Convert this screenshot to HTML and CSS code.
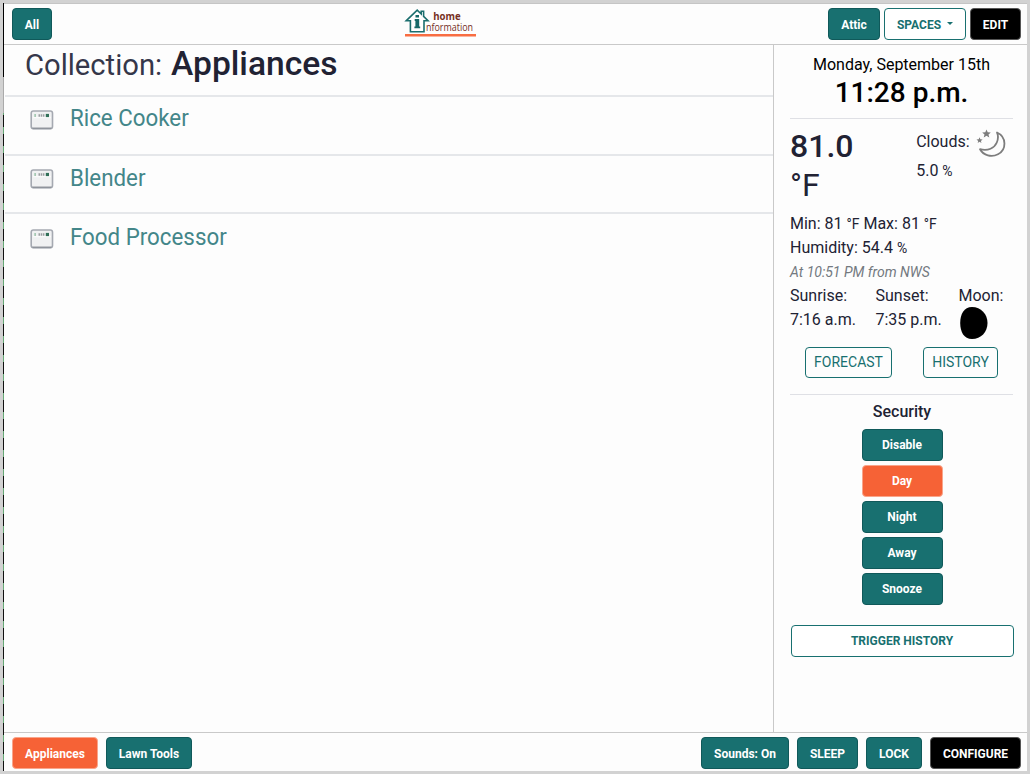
FILE: index.html
```html
<!DOCTYPE html>
<html lang="en">
<head>
<meta charset="utf-8">
<title>Home Information</title>
<link rel="stylesheet" href="styles.css">
</head>
<body>
<svg class="defs" width="0" height="0">
  <symbol id="appliance" viewBox="0 0 24 20">
    <rect x="1.2" y="1" width="21.3" height="17.6" rx="2.2" fill="#f0f1f2" stroke="#a5a9b1" stroke-width="1.6"/>
    <path d="M2.5 18.4h18.8" stroke="#8f949c" stroke-width="1.5"/>
    <path d="M3 7.5h18" stroke="#fafafa" stroke-width="1.5"/>
    <rect x="4.5" y="4" width="1.2" height="3" fill="#85b798"/>
    <path d="M8.500 5.500h6" stroke="#9b9ea1" stroke-width="2.500" stroke-dasharray="1.500 .7"/>
    <rect x="15.8" y="3.900" width="3.200" height="3.200" fill="#327159"/>
  </symbol>
</svg>
<div class="app">
  <div class="edge"></div>
  <div class="screen">
    <header class="bar">
      <a class="btn w40">All</a>
      <div class="logo">
        <svg width="74" height="29" viewBox="0 0 74 29">
          <path d="M2.3 12.7 13.2 2.200l4 3.800V3.300h2.400v5l4.400 4.400h-4V23.800H6.400V12.700Z" fill="#fff" stroke="#1b6e6e" stroke-width="1.600"/>
          <path d="M11.500 7h3.500v2.500h-3.500zM10.700 11.100h4.500v7.500h1v1.700h-5.800v-1.700h1v-5.700h-.7z" fill="#176969"/>
          <text x="29.200" y="11.800" class="logo-home" textLength="27.500" lengthAdjust="spacingAndGlyphs">home</text>
          <text x="22" y="23" class="logo-info" textLength="47" lengthAdjust="spacingAndGlyphs">nformation</text>
          <path d="M1 27.200h71" stroke="#f86d42" stroke-width="2.600"/>
        </svg>
      </div>
      <div class="group tight">
        <a class="btn w52">Attic</a>
        <a class="btn outline w82">SPACES <i class="caret"></i></a>
        <a class="btn black w51">EDIT</a>
      </div>
    </header>
    <div class="content">
      <main class="main">
        <h1 class="title"><span class="label">Collection:</span> <span class="name">Appliances</span></h1>
        <div class="item first"><svg class="icon" width="24" height="20"><use href="#appliance"/></svg><span>Rice Cooker</span></div>
        <div class="item"><svg class="icon" width="24" height="20"><use href="#appliance"/></svg><span>Blender</span></div>
        <div class="item last"><svg class="icon" width="24" height="20"><use href="#appliance"/></svg><span>Food Processor</span></div>
      </main>
      <aside class="side">
        <section class="clock">
          <div class="date">Monday, September 15th</div>
          <div class="time">11:28 p.m.</div>
        </section>
        <section class="weather">
          <div class="now">
            <div class="temp"><b>81.0</b><span>°F</span></div>
            <div class="clouds">
              <div class="cloud-row">Clouds:
                <svg width="30" height="30" viewBox="0 0 30 30" fill="none" stroke="#7d7d7d" stroke-width="1.800" stroke-linejoin="round">
                  <path d="M21 2.500C31 7 30.500 20 22 24.200C15.500 27.600 7.500 25.500 4 19.200C12 21.400 18.500 18 20.800 12.500C22.300 8.800 22.500 5.500 21 2.500Z"/>
                  <path stroke="none" fill="#7d7d7d" d="m10.500-.5 1.200 2.700 3.100.2-2.300 2 .8 3L10.500 5.800 7.700 7.400l.8-3L6.200 2.400l3.100-.2zM3.500 7.300l.9 2 2.200.1-1.700 1.500.6 2.100-2-1.200L1.700 13l.5-2.100L.5 9.400l2.200-.1z"/>
                </svg>
              </div>
              <div class="percent">5.0 <small>%</small></div>
            </div>
          </div>
          <div class="line">Min: 81 <small>°F</small> Max: 81 <small>°F</small></div>
          <div class="line">Humidity: 54.4 <small>%</small></div>
          <div class="source">At 10:51 PM from NWS</div>
          <div class="sun">
            <div>Sunrise:<br>7:16 a.m.</div>
            <div>Sunset:<br>7:35 p.m.</div>
            <div>Moon:<svg class="moon" width="28" height="32" viewBox="0 0 28 32"><path d="M12 0C21 0 27.500 7 27.500 16S21 32 12 32C4 32 .2 25 .2 16S4 0 12 0Z"/></svg></div>
          </div>
          <div class="links"><a class="link w87">FORECAST</a><a class="link w75">HISTORY</a></div>
        </section>
        <section class="security">
          <h2>Security</h2>
          <a class="btn w81">Disable</a>
          <a class="btn active w81">Day</a>
          <a class="btn w81">Night</a>
          <a class="btn w81">Away</a>
          <a class="btn w81">Snooze</a>
          <a class="btn outline trigger">TRIGGER HISTORY</a>
        </section>
      </aside>
    </div>
    <footer class="bar foot">
      <div class="group"><a class="btn active w86">Appliances</a><a class="btn w86">Lawn Tools</a></div>
      <div class="group"><a class="btn w88">Sounds: On</a><a class="btn w61">SLEEP</a><a class="btn w56">LOCK</a><a class="btn black w91">CONFIGURE</a></div>
    </footer>
  </div>
</div>
</body>
</html>
```
FILE: styles.css
```css
* { box-sizing: border-box; }
body { margin: 0; font-family: Roboto, sans-serif; font-size: 16px; line-height: 24px; color: #212233; }
.defs { display: block; }
.app { display: flex; width: 1030px; height: 774px; padding: 3px 3px 3px; background: #d2d2d2; overflow: hidden; }
.edge { width: 1px; flex: none; background: linear-gradient(#000 0 74px, #aaa 74px 110px, transparent 110px), repeating-linear-gradient(#111 0 10px, #66a875 10px 17px, #111 17px 19px); }
.screen { display: flex; flex-direction: column; width: 1023px; background: #fdfdfd; border-top: 1px solid #c5c5c5; }
.bar { position: relative; display: flex; justify-content: space-between; align-items: flex-start; flex: none; height: 41px; padding: 4px 6px 0 8px; border-bottom: 1px solid #c9c9c9; }
.bar .btn { padding-top: 2px; }
.foot { height: 39px; border: 0; border-top: 1px solid #c9c9c9; }
.logo { position: absolute; left: 400px; top: 4px; height: 29px; }
.logo svg { display: block; overflow: visible; }
.logo-home { font: 700 11px "Open Sans", sans-serif; fill: #76301f; }
.logo-info { font: 400 10px "Open Sans", sans-serif; fill: #76301f; }
.group { display: flex; gap: 8px; }
.tight { gap: 4px; }
.btn { display: flex; align-items: center; justify-content: center; flex: none; height: 32px; border: 1px solid #10595a; border-radius: 4px; background: #187070; color: #fff; font-size: 12px; font-weight: 700; line-height: 18px; white-space: nowrap; }
.active { background: #f66236; border-color: #f9a58b; }
.black { background: #000; border-color: #555; }
.outline { background: #fff; border-color: #187070; color: #187070; }
.caret { margin-left: 6px; margin-top: -4px; border: 3px solid transparent; border-top-color: currentColor; border-bottom: 0; }
.w40 { width: 40px; } .w51 { width: 51px; } .w52 { width: 52px; } .w56 { width: 56px; } .w61 { width: 61px; }
.w75 { width: 75px; } .w81 { width: 81px; } .w82 { width: 82px; } .w86 { width: 86px; } .w87 { width: 87px; } .w88 { width: 88px; } .w91 { width: 91px; }
.content { display: flex; flex: 1; min-height: 0; }
.main { width: 769px; padding-left: 1px; }
.title { display: flex; align-items: baseline; gap: 9px; margin: 0; height: 52px; padding: 0 0 0 20px; border-bottom: 2px solid #e5e7ea; line-height: 38px; }
.label { font-size: 29.200px; font-weight: 400; color: #35374a; }
.name { font-size: 33.600px; font-weight: 500; }
.item { display: flex; height: 58.500px; padding: 7px 0 0 25px; border-bottom: 2px solid #e5e7ea; color: #438689; font-size: 24px; line-height: 30px; }
.item .icon { margin: 6px 16px 0 0; }
.item span { transform: scaleX(.93); transform-origin: left; }
.first { padding-top: 6px; }
.first .icon { margin-top: 7px; }
.last { border: 0; padding-top: 8px; }
.last .icon { margin-top: 7px; }
.side { width: 254px; border-left: 1px solid #c9c9c9; padding: 7px 14px 0 16px; }
.clock { height: 67px; padding-top: 1px; border-bottom: 1px solid #dfe0e5; text-align: center; color: #000; }
.date { height: 24px; }
.time { font-size: 28px; font-weight: 500; line-height: 32px; }
.weather { height: 276px; padding-top: 8px; border-bottom: 1px solid #dfe0e5; }
.now { display: flex; height: 85px; }
.temp { display: flex; flex-direction: column; width: 126px; font-size: 32px; line-height: 39px; }
.temp b { font-weight: 500; }
.clouds { padding-left: .2px; line-height: 29px; white-space: nowrap; }
.cloud-row { display: flex; gap: 6px; height: 29px; }
.cloud-row svg { margin-top: 3px; overflow: visible; }
small { font-size: 14px; line-height: 1; }
.source { color: #737980; font-size: 14px; font-style: italic; }
.sun { display: flex; height: 56px; white-space: nowrap; }
.sun div:nth-child(1) { width: 85.500px; } .sun div:nth-child(2) { width: 83px; }
.moon { display: block; margin: -1px 0 0 1.500px; }
.links { display: flex; gap: 31px; padding: 7px 0 0 15px; }
.link { height: 31px; border: 1px solid #187070; border-radius: 4px; color: #187070; text-align: center; font-size: 14px; line-height: 29px; }
.security { display: flex; flex-direction: column; align-items: center; gap: 4px; padding-top: 5px; margin-right: -1px; }
.security h2 { margin: 0 0 1px; font-size: 16px; font-weight: 500; line-height: 24px; }
.trigger { width: 223px; margin-top: 16px; }
```
